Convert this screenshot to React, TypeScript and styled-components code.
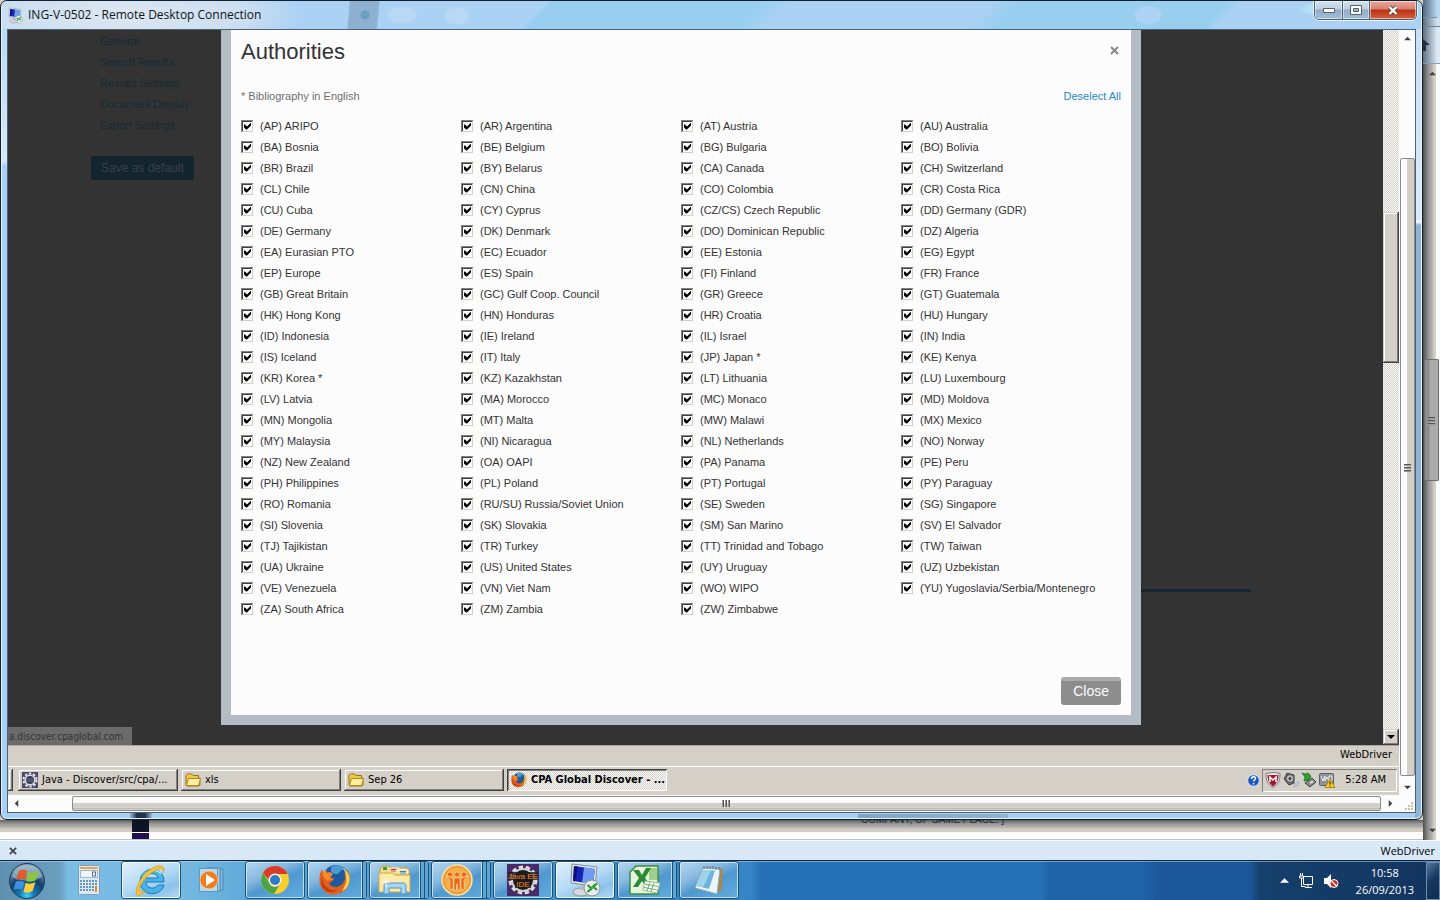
import React from "react";
import styled, { createGlobalStyle, css } from "styled-components";

const GlobalStyle = createGlobalStyle`
  *, *::before, *::after { box-sizing: border-box; }
  body { margin: 0; background: #d4d0c8; font-family: "Liberation Sans", Arial, sans-serif; font-size: 11px; color: #333; }
  button { font: inherit; color: inherit; margin: 0; padding: 0; border: 0; background: none; }
  svg { display: block; flex: none; }
`;

const uiFont = `"Open Sans", "Segoe UI", sans-serif`;
const classicFont = `"DejaVu Sans Condensed", Tahoma, sans-serif`;
const checker = `repeating-conic-gradient(#fcfcfc 0 25%, #d4d0c8 0 50%) 0 0 / 2px 2px`;

/* ---------- Desktop ---------- */

const Desktop = styled.div`
  display: flex;
  flex-direction: column;
  min-height: 100vh;
  overflow: hidden;
`;

const WorkArea = styled.div`
  flex: 1;
  display: grid;
  grid-template-columns: minmax(0, 1fr) 17px;
  grid-template-rows: minmax(0, 1fr) 20px;
`;

const BackColumn = styled.div`
  grid-row: 1 / 3;
  grid-column: 2;
  display: flex;
  flex-direction: column;
  border-right: 4px solid #fcfcfc;
  background: linear-gradient(90deg, #4c4c4c, #777 3px, #9a9a9a 6px, #b4b2ae 9px, #d4d0c8 11px);
`;

const BackChrome = styled.div`
  height: 64px;
  margin-right: -4px;
  border-bottom: 1px solid #8ba0b3;
  background:
    linear-gradient(#6d8296, #6d8296) 0 26px / 100% 1px no-repeat,
    linear-gradient(#7292ac, #7292ac) 0 17px / 14px 1px no-repeat,
    linear-gradient(90deg, rgba(40, 60, 80, 0.7), rgba(40, 60, 80, 0) 14px),
    linear-gradient(#b9d7f0 0 17px, #cfe0ee 18px 26px, #dce9f6 27px);
  svg { margin-top: 39px; }
`;

const BackTrack = styled.div`
  flex: 1;
  display: flex;
  flex-direction: column;
  align-items: flex-end;
  justify-content: space-between;
  padding: 6px 0;
`;

const BackThumb = styled.div`
  display: flex;
  align-items: center;
  justify-content: center;
  width: 15px;
  height: 122px;
  margin: 0 -3px 64px 0;
  border: 1px solid #6e6e6e;
  border-radius: 1px;
  background: linear-gradient(90deg, #8c8c8c 4px, #ababab 5px);
`;

const BackStrip = styled.div`
  display: flex;
  justify-content: space-between;
  padding: 0 419px 0 132px;
  overflow: hidden;
  background: linear-gradient(#5c5c5c 0, #7d7d7d 2px, #9a9a9a 4px, #b2b0ac 7px, #d0ccc4 9px, #d4d0c8 12px, #fcfcfc 12px, #fcfcfc 19px, #b5c6cd 19px);
`;

const NavyBlock = styled.div`
  width: 17px;
  height: 19px;
  background: linear-gradient(#0e1426 12px, #fcfcfc 12px, #fcfcfc 13px, #22104f 13px);
`;

const HiddenLine = styled.div`
  margin-top: -7px;
  font-size: 10px;
  line-height: 14px;
  color: #16233a;
`;

/* ---------- Remote desktop window ---------- */

const Window = styled.section`
  display: flex;
  flex-direction: column;
  min-width: 0;
  padding: 0 6px 6px;
  border: 1px solid #10202e;
  border-radius: 7px;
  box-shadow: inset 0 0 0 1px #e6f2fc;
  background:
    linear-gradient(90deg, rgba(30, 45, 70, 0), rgba(20, 32, 56, 0.9) 8px, rgba(20, 32, 56, 0.9) 16px, rgba(30, 45, 70, 0)) 128px 100% / 24px 6px no-repeat,
    linear-gradient(90deg, #7fa6c8, #8fb3d2) 857px 100% / 150px 5px no-repeat,
    linear-gradient(#c8dff3, #dcebf9 190px, #fcfcfc 193px, #8fb4d4 196px, #8fb4d4) 100% 28px / 7px 100% no-repeat,
    linear-gradient(#b7d7f2, #d5e8f8 160px, #a8d0f4 165px, #a8d0f4);
`;

const TitleBar = styled.header`
  display: flex;
  align-items: flex-start;
  justify-content: space-between;
  height: 28px;
  margin: 0 -5px;
  padding-left: 5px;
  border-radius: 6px 6px 0 0;
  background:
    radial-gradient(circle at 363px 14px, #6c9dc2 0 4px, transparent 5px),
    linear-gradient(95deg, transparent 346px, #8eb1d2 347px, #8eb1d2 375px, transparent 377px),
    radial-gradient(ellipse 180px 40px at 120px 14px, rgba(226, 232, 240, 0.95), rgba(214, 226, 240, 0.75) 70%, transparent),
    radial-gradient(ellipse 16px 9px at 400px 14px, #b8d9f4 80%, transparent),
    radial-gradient(ellipse 14px 9px at 455px 15px, #b8d9f4 80%, transparent),
    radial-gradient(ellipse 15px 10px at 1146px 14px, #acd3f4 80%, transparent),
    radial-gradient(ellipse 26px 8px at 1322px 8px, #b2e2f4 60%, transparent),
    linear-gradient(135deg, transparent 386px, #98cfef 390px, #98cfef 540px, transparent 560px, transparent 700px, #98cfef 720px, #98cfef 870px, transparent 876px),
    #abd2f4;
`;

const Title = styled.h1`
  display: flex;
  align-items: center;
  gap: 4px;
  height: 28px;
  margin: 0;
  font: 400 12px/28px ${uiFont};
  color: #0b1520;
  white-space: nowrap;
`;

const Captions = styled.div`
  display: flex;
  margin-right: 4px;
  border: 1px solid #4f6373;
  border-top: 0;
  border-radius: 0 0 5px 5px;
  overflow: hidden;
  box-shadow: 0 1px #e8f3fc, 1px 0 #e8f3fc, -1px 0 #e8f3fc;
`;

const CaptionButton = styled.button<{ $wide?: boolean; $danger?: boolean }>`
  display: flex;
  align-items: center;
  justify-content: center;
  width: ${(p) => (p.$wide ? 47 : 27)}px;
  height: 18px;
  box-shadow: inset 0 0 0 1px rgba(255, 255, 255, 0.5);
  background: ${(p) =>
    p.$danger
      ? "linear-gradient(#e8a99c, #d98272 8px, #b93016 9px, #d8603a)"
      : "linear-gradient(#d3e2ef, #bccfe1 8px, #8fabc6 9px, #a4c0d9)"};
  & + & { border-left: 1px solid #4f6373; }
`;

const Client = styled.div`
  flex: 1;
  display: grid;
  grid-template-columns: minmax(0, 1fr) 16px;
  grid-template-rows: minmax(0, 1fr) 17px;
  border: 1px solid #4b6276;
  background: #fcfcfc;
`;

const Remote = styled.div`
  display: flex;
  flex-direction: column;
  min-width: 0;
  background: #d4d0c8;
`;

const RailV = styled.div`
  display: flex;
  flex-direction: column;
  align-items: center;
  padding: 5px 0 4px 1px;
`;

const RailH = styled.div`
  display: flex;
  align-items: center;
  padding: 1px 5px;
`;

const RailThumbV = styled.div`
  flex: 1;
  display: flex;
  align-items: center;
  justify-content: center;
  width: 15px;
  margin: 116px 0 8px;
  border: 1px solid #8a8d90;
  border-radius: 2px;
  background: linear-gradient(90deg, #fcfcfc 6px, #d4d0c8 6px);
`;

const RailThumbH = styled.div`
  flex: 1;
  display: flex;
  align-items: center;
  justify-content: center;
  height: 15px;
  margin: 0 6px 0 52px;
  border: 1px solid #8a8d90;
  border-radius: 2px;
  background: linear-gradient(#fcfcfc 6px, #d4d0c8 6px, #d4d0c8 11px, #b4bcc4 11px, #b4bcc4 12px, #d4d0c8 12px);
`;

const Corner = styled.div`
  display: flex;
  align-items: flex-end;
  justify-content: flex-end;
  padding: 2px;
`;

/* ---------- Page in the remote browser ---------- */

const Browser = styled.div`
  position: relative;
  flex: 1;
  display: grid;
  grid-template-columns: 213px minmax(0, 920px) minmax(0, 1fr) 16px;
  background: #333;
`;

const Sidebar = styled.nav`
  display: flex;
  flex-direction: column;
  align-items: flex-start;
  padding: 1px 0 0 83px;
`;

const SideLink = styled.a`
  padding-left: 9px;
  line-height: 21px;
  color: #152a35;
  text-decoration: none;
`;

const SaveButton = styled.button`
  height: 24px;
  margin-top: 20px;
  padding: 0 10px;
  border-radius: 2px;
  background: #13262f;
  font-size: 12px;
  color: #3a3e48;
`;

const Modal = styled.div`
  align-self: start;
  padding: 0 10px 10px;
  border: 10px solid #b4bcc4;
  border-top: 0;
  background: #fcfcfc;
`;

const ModalHead = styled.div`
  display: flex;
  align-items: center;
  justify-content: space-between;
  height: 44px;
`;

const ModalTitle = styled.h2`
  margin: 0;
  font-size: 22px;
  font-weight: 400;
  line-height: 44px;
`;

const IconButton = styled.button`
  display: flex;
  margin: 0 2px 4px 0;
`;

const NoteRow = styled.div`
  display: flex;
  align-items: center;
  justify-content: space-between;
  height: 41px;
  padding-top: 3px;
  color: #6e6e6e;
  line-height: 21px;
`;

const DeselectLink = styled.a`
  color: #2489c5;
  text-decoration: none;
`;

const Grid = styled.div`
  display: grid;
  grid-template-columns: repeat(4, minmax(0, 1fr));
`;

const Option = styled.label`
  display: flex;
  align-items: center;
  gap: 7px;
  height: 21px;
  white-space: nowrap;
`;

const Tick = styled.input`
  appearance: none;
  flex: none;
  width: 12px;
  height: 12px;
  margin: 0;
  padding: 3px;
  background: #fff;
  box-shadow: inset 1px 1px #808080, inset -1px -1px #d4d0c8, inset 2px 2px #404040;
  &:checked::after {
    content: "";
    display: block;
    width: 7px;
    height: 7px;
    background: #000;
    clip-path: polygon(0 2px, 1px 2px, 3px 4px, 7px 0, 7px 3px, 3px 7px, 2px 7px, 0 5px);
  }
`;

const ModalFoot = styled.div`
  display: flex;
  justify-content: flex-end;
  margin-top: 58px;
`;

const CloseButton = styled.button`
  height: 28px;
  padding: 0 12px;
  border-radius: 3px;
  background: linear-gradient(#ababab 4px, #8d8d8d 4px);
  font-size: 14px;
  color: #fcfcfc;
`;

const Rule = styled.div`
  width: 110px;
  height: 3px;
  margin-top: 559px;
  background: #162630;
`;

const Scroll = styled.div`
  display: flex;
  flex-direction: column;
  justify-content: space-between;
  background: ${checker};
`;

const raised = css`
  background: #d4d0c8;
  box-shadow: inset -1px -1px #404040, inset 1px 1px #d4d0c8, inset -2px -2px #808080, inset 2px 2px #fff;
`;

const ScrollThumb = styled.div`
  height: 151px;
  margin-top: 182px;
  ${raised}
`;

const ScrollButton = styled.button`
  display: flex;
  align-items: center;
  justify-content: center;
  height: 16px;
  ${raised}
`;

const UrlHint = styled.div`
  position: absolute;
  left: 0;
  bottom: 0;
  width: 124px;
  height: 18px;
  padding-left: 1px;
  overflow: hidden;
  background: #6b6b6b;
  color: #333;
  font: 10px/20px ${classicFont};
  white-space: nowrap;
`;

const StatusLine = styled.div`
  height: 21px;
  padding-right: 7px;
  border-top: 1px solid #aaa69e;
  text-align: right;
  font: 11px/18px ${classicFont};
  color: #000;
`;

const ClassicBar = styled.div`
  display: flex;
  gap: 3px;
  height: 29px;
  padding: 2px 2px 4px 0;
  border-top: 1px solid #fff;
  font: 11px/20px ${classicFont};
  color: #000;
`;

const Sliver = styled.div`
  width: 5px;
  margin-right: 2px;
  ${raised}
`;

const ClassicTask = styled.button<{ $active?: boolean }>`
  display: flex;
  align-items: center;
  gap: 4px;
  width: 160px;
  padding-left: 4px;
  white-space: nowrap;
  ${raised}
  ${(p) =>
    p.$active &&
    css`
      font-weight: 700;
      background: ${checker};
      box-shadow: inset 1px 1px #404040, inset -1px -1px #fff, inset 2px 2px #808080;
    `}
`;

const ClassicTray = styled.div`
  display: flex;
  align-items: center;
  gap: 2px;
  margin-left: auto;
`;

const TrayBox = styled.div`
  display: flex;
  align-items: center;
  gap: 2px;
  height: 23px;
  padding: 0 11px 0 3px;
  box-shadow: inset 1px 1px #808080, inset -1px -1px #fff;
  span { margin-left: 8px; }
`;

/* ---------- Host status bar and taskbar ---------- */

const AddonBar = styled.div`
  display: flex;
  align-items: center;
  justify-content: space-between;
  height: 20px;
  padding: 0 5px 0 9px;
  border-top: 1px solid #fcfcfc;
  background: #d9e8f7;
  font: 11px/18px ${uiFont};
  color: #000;
`;

const AddonClose = styled.button`
  display: flex;
`;

const TaskBar = styled.footer`
  display: flex;
  gap: 2px;
  height: 40px;
  border-top: 1px solid #14273c;
  box-shadow: inset 0 1px rgba(190, 220, 245, 0.5);
  background: linear-gradient(90deg, #5e8fae 0, #6a9fc0 60px, #7bbce4 68px, #76b9e2 180px, #5ea9d8 250px, #4f9bd0 480px, #3f8cc8 600px, #3585c4 750px, #2671b5 762px, #2671b5 1040px, #1f63a8 1050px, #1f63a8 1140px, #1b5799 1160px, #1b5799 1250px, #153f6c 1260px, #12355f 100%);
`;

const StartButton = styled.button`
  display: flex;
  align-items: center;
  justify-content: center;
  width: 57px;
  padding-right: 3px;
`;

const Task = styled.button<{ $open?: boolean; $lit?: boolean; $stack?: number }>`
  display: flex;
  align-items: center;
  justify-content: center;
  position: relative;
  width: 60px;
  height: 38px;
  border: 1px solid transparent;
  border-radius: 3px;
  ${(p) =>
    p.$open &&
    css`
      border-color: #1c5177;
      padding-right: ${(p.$stack || 0) * 4}px;
      background: ${p.$lit
        ? "linear-gradient(155deg, #e2effa 0, #b9dcf5 45%, #8cc3ea 75%, #b4dcf6)"
        : "linear-gradient(155deg, #b4d6ef 0, #86b9df 35%, #4f98cf 55%, #62aedd)"};
      box-shadow: inset 0 0 0 1px ${p.$lit ? "#f0f8fe" : "rgba(214, 235, 250, 0.8)"};
    `}
`;

const StackEdge = styled.i<{ $offset: number }>`
  position: absolute;
  top: 0;
  bottom: 0;
  right: ${(p) => p.$offset}px;
  width: 4px;
  border-left: 1px solid #1c5177;
  box-shadow: -1px 0 rgba(214, 235, 250, 0.8);
  background: #5ea6d6;
`;

const Tray = styled.div`
  display: flex;
  align-items: center;
  gap: 9px;
  margin-left: auto;
  color: #fff;
`;

const Clock = styled.time`
  margin: 0 3px 0 8px;
  font: 11px/17px ${uiFont};
  text-align: center;
`;

const ShowDesktop = styled.button`
  width: 14px;
  height: 38px;
  border: 1px solid #6c8cab;
  background: linear-gradient(135deg, #54789c, #173960 45%, #0f2c50);
`;

/* ---------- Icons ---------- */

const Arrow = ({ dir, color = "#404040", size = 7 }: { dir: "up" | "down" | "left" | "right"; color?: string; size?: number }) => {
  const turn = { up: 0, right: 90, down: 180, left: 270 }[dir];
  return (
    <svg width={size} height={size} viewBox="0 0 8 8" aria-hidden="true">
      <path d="M4 2 8 6H0z" fill={color} transform={`rotate(${turn} 4 4)`} />
    </svg>
  );
};

const Grip = ({ vertical }: { vertical?: boolean }) => (
  <svg width="9" height="9" viewBox="0 0 9 9" aria-hidden="true">
    <g transform={vertical ? "rotate(90 4.5 4.5)" : undefined}>
      <path d="M1 1h7v1H1zM1 4h7v1H1zM1 7h7v1H1z" fill="#555" />
      <path d="M1 2h7v1H1zM1 5h7v1H1zM1 8h7v1H1z" fill="#999" />
    </g>
  </svg>
);

const Cross = ({ color = "#888", size = 9, width = 2 }: { color?: string; size?: number; width?: number }) => (
  <svg width={size} height={size} viewBox="0 0 9 9" aria-hidden="true">
    <path d="m1 1 7 7M8 1 1 8" stroke={color} strokeWidth={width} />
  </svg>
);

const RdpIcon = ({ size = 36 }: { size?: number }) => (
  <svg width={size} height={size} viewBox="0 0 36 36" aria-hidden="true">
    <ellipse cx="14" cy="30" rx="8" ry="4" fill="#d6d9dc" stroke="#8f979e" />
    <path d="M14 22h7l1 6h-9z" fill="#b8bec4" />
    <path d="M5 2l25 3-2 19L4 21z" fill="#e7ebee" stroke="#828c96" />
    <path d="M7 4l21 3-2 15L6 19z" fill="#1626b4" />
    <path d="M17 5.500l11 1.500-2 15-11-1.500z" fill="#6f9cf0" />
    <path d="M7 4l4 .5-3 15-2-.5z" fill="#0b1380" />
    <circle cx="25" cy="26" r="8" fill="#e9ecec" stroke="#8a9296" />
    <path d="m20.500 23 4 3.500-4 3.500M30 21.500l-4 3 4 3.500" fill="none" stroke="#2a9a34" strokeWidth="2.200" />
  </svg>
);

const Folder = () => (
  <svg width="16" height="16" viewBox="0 0 16 16" aria-hidden="true">
    <path d="M1 3.500 2.500 2h4L8 3.500h5.500V6H15v7l-1 1H2l-1-1z" fill="#f0c84a" stroke="#9c7410" />
    <path d="M3.500 6.500H15.500L13.500 13.500H1.500z" fill="#fdf0a0" stroke="#b58a1c" />
  </svg>
);

const Gear = () => (
  <svg width="16" height="16" viewBox="0 0 16 16" aria-hidden="true">
    <rect width="16" height="16" fill="#4c4a6c" />
    <circle cx="8" cy="8" r="6.500" fill="none" stroke="#e6e6ea" strokeWidth="2" strokeDasharray="2.500 1.600" />
    <circle cx="8" cy="8" r="4.800" fill="#333e55" stroke="#dcdce2" strokeWidth="1.500" />
    <path d="M4 7h8M4 9h8" stroke="#66728c" />
  </svg>
);

const Firefox = ({ size }: { size: number }) => (
  <svg width={size} height={size} viewBox="0 0 32 32" aria-hidden="true">
    <circle cx="17" cy="14" r="13" fill="#1d5a9e" />
    <path d="M12 3c5-3 12-2 15 3-4-1-6 1-7 3s-5 1-8-1z" fill="#4d9bd4" />
    <path d="M27 4c5 6 5 15 0 21s-16 8-22 2S-.5 11 3 5l1 4 3-3 1 3c3-1 5 0 6 1l-3 3 4 2c-1 3-4 3-5 4 2 5 8 5 12 2s5-8 3-12c3 2 4 5 4 8 1-5 0-9-2-13z" fill="#e4611b" />
    <path d="M24 4c5 3 8 9 6 15-1 4-4 7-7 8 5-7 6-15 1-23z" fill="#fbd24e" />
    <path d="M3 13c0 9 7 14 15 13-5 4-13 2-15-4-1-3-1-6 0-9z" fill="#c33a16" />
    <path d="M4 9l3-3 1 3c3-1 5 0 6 1l-3 3 3 2c-2 1-4 0-5 2-3-1-5-4-5-8z" fill="#f58a2a" />
  </svg>
);

const WindowsOrb = () => (
  <svg width="38" height="38" viewBox="0 0 38 38" aria-hidden="true">
    <defs>
      <radialGradient id="orb" cx="50%" cy="92%" r="85%">
        <stop offset="0" stopColor="#35d6fb" />
        <stop offset=".25" stopColor="#1b78b4" />
        <stop offset=".6" stopColor="#153f6b" />
        <stop offset="1" stopColor="#7fa0b8" />
      </radialGradient>
    </defs>
    <circle cx="19" cy="19" r="17.500" fill="url(#orb)" stroke="#1e3b55" />
    <path d="M4 15C6 6 12 3 19 3s13 4 15 12c-8 4-22 5-30 0z" fill="#b9cedd" opacity=".55" />
    <path d="M11 9c3-2 6-1 8 0l-2 9c-3-2-6-1-9 0z" fill="#ea5a28" />
    <path d="M20 10c3 1 7 1 11-1l-3 9c-3 2-7 2-10 1z" fill="#8cc63f" />
    <path d="M7.500 20c3-2 6-1 9 0l-2 8c-3-2-6-1-9 0z" fill="#3d8fe0" />
    <path d="M17.500 21c3 1 7 1 10-1l-3 9c-3 2-6 2-9 1z" fill="#fcd13c" />
  </svg>
);

const Calculator = () => (
  <svg width="22" height="30" viewBox="0 0 22 30" aria-hidden="true">
    <rect x=".5" y=".5" width="21" height="29" rx="1" fill="#dceaf5" stroke="#7f9fbb" />
    <rect x="2" y="2" width="18" height="2" fill="#f2a04a" />
    <rect x="2.500" y="5.500" width="17" height="7" fill="#eef5fa" stroke="#9db6ca" />
    <rect x="14.500" y="7" width="3" height="4" fill="none" stroke="#56728a" />
    {[15, 18, 21, 24].map((y) =>
      [2, 5, 8, 11, 14].map((x) => <rect key={`${x}-${y}`} x={x} y={y} width="2" height="2" fill="#6d93b5" />)
    )}
    <path d="M17 15h2v2h-2zM17 18h2v2h-2z" fill="#6d93b5" />
    <path d="M17 21h2v6h-2z" fill="#f08a24" />
  </svg>
);

const Explorer = () => (
  <svg width="34" height="32" viewBox="0 0 34 32" aria-hidden="true">
    <path d="M30 18H12c0 7 9 8 12 3h6c-3 12-23 12-24-3C6 2 30 0 30 18zM12 14h12c-1-6-11-6-12 0z" fill="#45b4ea" stroke="#1d78b8" />
    <path d="M9 13c3-7 14-9 18-3" fill="none" stroke="#b4e6fb" strokeWidth="1.500" />
    <path d="M3 31C-1 24 12 4 24 2c6-1 7 3 5 7 1-4-1-5-4-4C15 8 3 22 6 27c1 2 4 1 6 0-3 3-7 5-9 4z" fill="#f7c531" stroke="#d9930e" strokeWidth=".6" />
  </svg>
);

const MediaPlayer = () => (
  <svg width="28" height="26" viewBox="0 0 28 26" aria-hidden="true">
    <path d="M10 2h14v21H10z" fill="#7db4da" stroke="#4d8bb8" />
    <path d="M7 1h14v23H7z" fill="#9dcbe8" stroke="#4d8bb8" />
    <path d="M.5 1.500h18v23H.500z" fill="#b7daf0" stroke="#5b98c3" />
    <circle cx="10" cy="13" r="9" fill="#f07c1c" stroke="#fbd0a0" strokeWidth=".7" />
    <path d="M7 7v12l9-6z" fill="#fff" />
  </svg>
);

const Chrome = () => (
  <svg width="30" height="30" viewBox="0 0 30 30" aria-hidden="true">
    <circle cx="15" cy="15" r="14" fill="#f9ce2d" />
    <path d="M2.900 8A14 14 0 0 1 27.600 9H15a6 6 0 0 0-6 6z" fill="#d93a2b" />
    <path d="M2.900 8A14 14 0 0 0 14 29l6-10a6 6 0 0 1-11-2z" fill="#4aa548" />
    <circle cx="15" cy="15" r="6.500" fill="#f4f4f4" />
    <circle cx="15" cy="15" r="5" fill="#2e7ac4" />
  </svg>
);

const Library = () => (
  <svg width="34" height="32" viewBox="0 0 34 32" aria-hidden="true">
    <path d="M2 5l2-3h7l2 3h4l2-1h10l2 3v4H2z" fill="#f3dc8c" stroke="#c49f45" />
    <path d="M5 3h4v3H5z" fill="#28a040" />
    <path d="M13 5h5v3h-5z" fill="#c63f2a" />
    <path d="M22 7h6v3h-6z" fill="#2d7fc6" />
    <path d="M12 4h9v3h-9M21 6h9v3h-9" fill="none" stroke="#fff8dc" />
    <path d="M1 9h14l2 2h15v17H1z" fill="#fbe9a8" stroke="#cfa94a" />
    <path d="M6 30V22c0-2 1-3 3-3h16c2 0 3 1 3 3v8h-5v-6H11v6z" fill="#a6d6f2" stroke="#4b94c4" />
    <path d="M8 14v9M4 18h8" stroke="#fff" />
  </svg>
);

const PeopleBadge = () => (
  <svg width="32" height="32" viewBox="0 0 32 32" aria-hidden="true">
    <circle cx="16" cy="16" r="15" fill="#f5ae45" stroke="#fbe0a6" strokeWidth="1.500" />
    <circle cx="16" cy="16" r="13.500" fill="none" stroke="#e3912a" />
    <g fill="#f0640f" stroke="#fff0d6" strokeWidth=".5">
      <circle cx="9" cy="10.500" r="2.500" />
      <circle cx="16" cy="10.500" r="2.500" />
      <circle cx="23" cy="10.500" r="2.500" />
      <path d="M5 12l7 2.500v10L9 26V16zM27 12l-7 2.500v10l3 1.500V16zM13 14h6v12h-2.500v-6h-1v6H13z" />
    </g>
  </svg>
);

const JavaIde = () => (
  <svg width="32" height="32" viewBox="0 0 32 32" aria-hidden="true">
    <rect width="32" height="32" fill="#472a68" />
    <circle cx="16" cy="16" r="12.500" fill="none" stroke="#dcdcdc" strokeWidth="4" strokeDasharray="4.200 2.600" />
    <circle cx="16" cy="16" r="11" fill="#1b1b20" stroke="#cfcfd2" strokeWidth="2" />
    <path d="M1 8h30v8H1zM8 16h16v8H8z" fill="#1b1b20" opacity=".8" />
    <text x="16" y="15" textAnchor="middle" fontFamily="Liberation Sans, sans-serif" fontSize="8" fill="#ff8a1e">Java EE</text>
    <text x="16" y="23" textAnchor="middle" fontFamily="Liberation Sans, sans-serif" fontSize="8" fill="#ff8a1e">IDE</text>
  </svg>
);

const Spreadsheet = () => (
  <svg width="32" height="30" viewBox="0 0 32 30" aria-hidden="true">
    <path d="M7 1h22v28H1V7z" fill="#e6f3df" stroke="#3c8d3e" strokeWidth="1.500" />
    <path d="M20 3h8v12h-8z" fill="#9ed08e" />
    <path d="M4 5h6l3 5 4-7h5l-6 10 7 9h-6l-4-6-4 6H4l6-9z" fill="#2b8a35" />
    <path d="M16 16l15 2-3 10-14-3z" fill="#fff" stroke="#8fbf86" />
    <path d="M16 19l13 2.500M15 22.500l13 2.500M21 17l-3 9M25 18l-3 9" stroke="#6fb267" />
  </svg>
);

const Notepad = () => (
  <svg width="32" height="30" viewBox="0 0 32 30" aria-hidden="true">
    <path d="M26 3l4 1-1 20-4 4z" fill="#a58752" />
    <path d="M10 3l17 1-3 25-7-2-15-4z" fill="#eef6fa" stroke="#88a9be" />
    <path d="M10 5l12 .5-6 18.500-12-3z" fill="#6db4da" />
    <path d="M10 5l8 .5-8 17-6-1.500z" fill="#9dd2ec" />
    <path d="M11 1v3M14 1v3M17 1v3M20 1v3M23 2v3M26 2v3" stroke="#5f6d76" />
  </svg>
);

const Help = () => (
  <svg width="13" height="13" viewBox="0 0 13 13" aria-hidden="true">
    <circle cx="6.500" cy="6.500" r="5.800" fill="#1c58c4" stroke="#dfeaff" />
    <path d="M4.500 5c0-3 4-3 4-.5 0 1.500-2 1.500-2 3M6.500 9v1.500" fill="none" stroke="#fff" strokeWidth="1.500" />
  </svg>
);

const Shield = () => (
  <svg width="16" height="16" viewBox="0 0 16 16" aria-hidden="true">
    <path d="M1 1.500 8 .5l7 1c0 8-2 11-7 14-5-3-7-6-7-14z" fill="#f4f4f4" stroke="#777" />
    <path d="M2.500 3h11c0 6-2 9-5.500 11.500C4.500 12 2.500 9 2.500 3z" fill="#a3182c" />
    <path d="M5 10V5l3 3 3-3v5" fill="none" stroke="#fff" strokeWidth="1.500" />
  </svg>
);

const Volume = () => (
  <svg width="16" height="16" viewBox="0 0 16 16" aria-hidden="true">
    <path d="M1 7 4 1l7 2v8l-5 2z" fill="#777" stroke="#444" />
    <circle cx="7" cy="6.500" r="4" fill="#bbb" stroke="#444" />
    <circle cx="7" cy="6.500" r="1.500" fill="#444" />
    <path d="M12 11c0 2-1 3-2 4M15 9c0 3-1 5-3 6" fill="none" stroke="#8fa3e4" />
  </svg>
);

const Eject = () => (
  <svg width="16" height="16" viewBox="0 0 16 16" aria-hidden="true">
    <path d="M4 11l7-5 4 4-6 5z" fill="#8b8b8b" stroke="#444" />
    <path d="M9 11l3-1.500" stroke="#eee" strokeWidth="1.500" />
    <path d="M1 1l3 1 3-1 3 3-2 4-5 1 1-4z" fill="#2ea32b" stroke="#16691a" strokeWidth=".7" />
  </svg>
);

const VmWarning = () => (
  <svg width="16" height="16" viewBox="0 0 16 16" aria-hidden="true">
    <rect x=".5" y="1.500" width="14" height="12" rx="1" fill="#8d9298" stroke="#5c6066" />
    <path d="m2 4 2 5 2-5v5l2-4 2 4V4h3v5" fill="none" stroke="#f2f2f2" />
    <path d="M11 6.500 16 15.500H6z" fill="#f9cf1d" stroke="#8f6d04" strokeWidth=".7" />
    <path d="M11 9.500v3M11 13.500v1" stroke="#000" />
  </svg>
);

const Network = () => (
  <svg width="16" height="16" viewBox="0 0 16 16" aria-hidden="true">
    <path d="M5.500 3.500h9v8h-9zM2.500 0v3M4.500 0v3M1.500 3v2h4V3zM3.500 5v8.500h4M10 12v2M7 14.500h7" fill="none" stroke="#fff" />
  </svg>
);

const Muted = () => (
  <svg width="16" height="16" viewBox="0 0 16 16" aria-hidden="true">
    <path d="M1 5h3l4-4v14l-4-4H1z" fill="#fff" />
    <circle cx="11" cy="10.500" r="4" fill="#d32a25" stroke="#fff" strokeWidth="1" />
    <path d="m8.500 8 5 5" stroke="#fff" strokeWidth="1.300" />
  </svg>
);

/* ---------- Data ---------- */

const authorities = [
  "(AP) ARIPO", "(AR) Argentina", "(AT) Austria", "(AU) Australia",
  "(BA) Bosnia", "(BE) Belgium", "(BG) Bulgaria", "(BO) Bolivia",
  "(BR) Brazil", "(BY) Belarus", "(CA) Canada", "(CH) Switzerland",
  "(CL) Chile", "(CN) China", "(CO) Colombia", "(CR) Costa Rica",
  "(CU) Cuba", "(CY) Cyprus", "(CZ/CS) Czech Republic", "(DD) Germany (GDR)",
  "(DE) Germany", "(DK) Denmark", "(DO) Dominican Republic", "(DZ) Algeria",
  "(EA) Eurasian PTO", "(EC) Ecuador", "(EE) Estonia", "(EG) Egypt",
  "(EP) Europe", "(ES) Spain", "(FI) Finland", "(FR) France",
  "(GB) Great Britain", "(GC) Gulf Coop. Council", "(GR) Greece", "(GT) Guatemala",
  "(HK) Hong Kong", "(HN) Honduras", "(HR) Croatia", "(HU) Hungary",
  "(ID) Indonesia", "(IE) Ireland", "(IL) Israel", "(IN) India",
  "(IS) Iceland", "(IT) Italy", "(JP) Japan *", "(KE) Kenya",
  "(KR) Korea *", "(KZ) Kazakhstan", "(LT) Lithuania", "(LU) Luxembourg",
  "(LV) Latvia", "(MA) Morocco", "(MC) Monaco", "(MD) Moldova",
  "(MN) Mongolia", "(MT) Malta", "(MW) Malawi", "(MX) Mexico",
  "(MY) Malaysia", "(NI) Nicaragua", "(NL) Netherlands", "(NO) Norway",
  "(NZ) New Zealand", "(OA) OAPI", "(PA) Panama", "(PE) Peru",
  "(PH) Philippines", "(PL) Poland", "(PT) Portugal", "(PY) Paraguay",
  "(RO) Romania", "(RU/SU) Russia/Soviet Union", "(SE) Sweden", "(SG) Singapore",
  "(SI) Slovenia", "(SK) Slovakia", "(SM) San Marino", "(SV) El Salvador",
  "(TJ) Tajikistan", "(TR) Turkey", "(TT) Trinidad and Tobago", "(TW) Taiwan",
  "(UA) Ukraine", "(US) United States", "(UY) Uruguay", "(UZ) Uzbekistan",
  "(VE) Venezuela", "(VN) Viet Nam", "(WO) WIPO", "(YU) Yugoslavia/Serbia/Montenegro",
  "(ZA) South Africa", "(ZM) Zambia", "(ZW) Zimbabwe",
];

const sideLinks = ["General", "Search Results", "Results Settings", "Document Display", "Export Settings"];

const hostTasks = [
  { name: "Calculator", icon: <Calculator /> },
  { name: "Internet Explorer", icon: <Explorer />, open: true, lit: true },
  { name: "Media Player", icon: <MediaPlayer /> },
  { name: "Chrome", icon: <Chrome />, open: true },
  { name: "Firefox", icon: <Firefox size={32} />, open: true, stack: 1 },
  { name: "File Explorer", icon: <Library />, open: true, stack: 2 },
  { name: "Contacts", icon: <PeopleBadge />, open: true, stack: 2 },
  { name: "Java EE IDE", icon: <JavaIde />, open: true },
  { name: "Remote Desktop", icon: <RdpIcon />, open: true, lit: true },
  { name: "Excel", icon: <Spreadsheet />, open: true, stack: 1 },
  { name: "Notepad", icon: <Notepad />, open: true },
];

/* ---------- Parts ---------- */

const AuthoritiesDialog = () => (
  <Modal role="dialog" aria-labelledby="dialog-title">
    <ModalHead>
      <ModalTitle id="dialog-title">Authorities</ModalTitle>
      <IconButton aria-label="Close dialog"><Cross /></IconButton>
    </ModalHead>
    <NoteRow>
      <span>* Bibliography in English</span>
      <DeselectLink href="#deselect">Deselect All</DeselectLink>
    </NoteRow>
    <Grid>
      {authorities.map((name) => (
        <Option key={name}>
          <Tick type="checkbox" defaultChecked />
          {name}
        </Option>
      ))}
    </Grid>
    <ModalFoot><CloseButton>Close</CloseButton></ModalFoot>
  </Modal>
);

const RemoteTaskbar = () => (
  <ClassicBar>
    <Sliver />
    <ClassicTask><Gear />Java - Discover/src/cpa/...</ClassicTask>
    <ClassicTask><Folder />xls</ClassicTask>
    <ClassicTask><Folder />Sep 26</ClassicTask>
    <ClassicTask $active><Firefox size={16} />CPA Global Discover - ...</ClassicTask>
    <ClassicTray>
      <Help />
      <TrayBox>
        <Shield /><Volume /><Eject /><VmWarning />
        <span>5:28 AM</span>
      </TrayBox>
    </ClassicTray>
  </ClassicBar>
);

export default function App() {
  return (
    <Desktop>
      <GlobalStyle />
      <WorkArea>
        <Window>
          <TitleBar>
            <Title><RdpIcon size={17} />ING-V-0502 - Remote Desktop Connection</Title>
            <Captions>
              <CaptionButton aria-label="Minimize">
                <svg width="12" height="5" viewBox="0 0 12 5"><path d="M.5.5h11v4H.5z" fill="#fff" stroke="#54616e" /></svg>
              </CaptionButton>
              <CaptionButton aria-label="Maximize">
                <svg width="12" height="10" viewBox="0 0 12 10"><path d="M.5.500h11v9H.5zM3.500 3.500h5v3h-5z" fill="#fff" fillRule="evenodd" stroke="#54616e" /></svg>
              </CaptionButton>
              <CaptionButton $wide $danger aria-label="Close window">
                <svg width="12" height="11" viewBox="0 0 12 11">
                  <path d="m2.500 2 7 7M9.500 2l-7 7" stroke="#5a4a4c" strokeWidth="4" />
                  <path d="m2.500 2 7 7M9.500 2l-7 7" stroke="#fff" strokeWidth="2.300" />
                </svg>
              </CaptionButton>
            </Captions>
          </TitleBar>
          <Client>
            <Remote>
              <Browser>
                <Sidebar>
                  {sideLinks.map((text) => <SideLink key={text} href="#settings">{text}</SideLink>)}
                  <SaveButton>Save as default</SaveButton>
                </Sidebar>
                <AuthoritiesDialog />
                <Rule />
                <Scroll>
                  <ScrollThumb />
                  <ScrollButton aria-label="Scroll down"><Arrow dir="down" color="#000" size={8} /></ScrollButton>
                </Scroll>
                <UrlHint>a.discover.cpaglobal.com</UrlHint>
              </Browser>
              <StatusLine>WebDriver</StatusLine>
              <RemoteTaskbar />
            </Remote>
            <RailV>
              <Arrow dir="up" />
              <RailThumbV><Grip /></RailThumbV>
              <Arrow dir="down" />
            </RailV>
            <RailH>
              <Arrow dir="left" />
              <RailThumbH><Grip vertical /></RailThumbH>
              <Arrow dir="right" />
            </RailH>
            <Corner>
              <svg width="8" height="8" viewBox="0 0 8 8" aria-hidden="true">
                <path d="M6 0h2v2H6zM3 3h2v2H3zM6 3h2v2H6zM0 6h2v2H0zM3 6h2v2H3zM6 6h2v2H6z" fill="#c4c0b8" />
              </svg>
            </Corner>
          </Client>
        </Window>
        <BackStrip>
          <NavyBlock />
          <HiddenLine>COMPANY, OF SAME PLACE. ]</HiddenLine>
        </BackStrip>
        <BackColumn>
          <BackChrome>
            <svg width="8" height="12" viewBox="0 0 8 12" aria-hidden="true">
              <path d="M0 0 7 6H3v6H0z" fill="#27313b" />
            </svg>
          </BackChrome>
          <BackTrack>
            <Arrow dir="up" />
            <BackThumb><Grip /></BackThumb>
            <Arrow dir="down" />
          </BackTrack>
        </BackColumn>
      </WorkArea>
      <AddonBar>
        <AddonClose aria-label="Close add-on bar"><Cross color="#444" size={8} /></AddonClose>
        <span>WebDriver</span>
      </AddonBar>
      <TaskBar>
        <StartButton aria-label="Start"><WindowsOrb /></StartButton>
        {hostTasks.map((t) => (
          <Task key={t.name} aria-label={t.name} $open={t.open} $lit={t.lit} $stack={t.stack}>
            {t.icon}
            {Array.from({ length: t.stack || 0 }, (_, i) => <StackEdge key={i} $offset={i * 4} />)}
          </Task>
        ))}
        <Tray>
          <Arrow dir="up" color="#fff" size={9} />
          <Network />
          <Muted />
          <Clock>10:58<br />26/09/2013</Clock>
          <ShowDesktop aria-label="Show desktop" />
        </Tray>
      </TaskBar>
    </Desktop>
  );
}
